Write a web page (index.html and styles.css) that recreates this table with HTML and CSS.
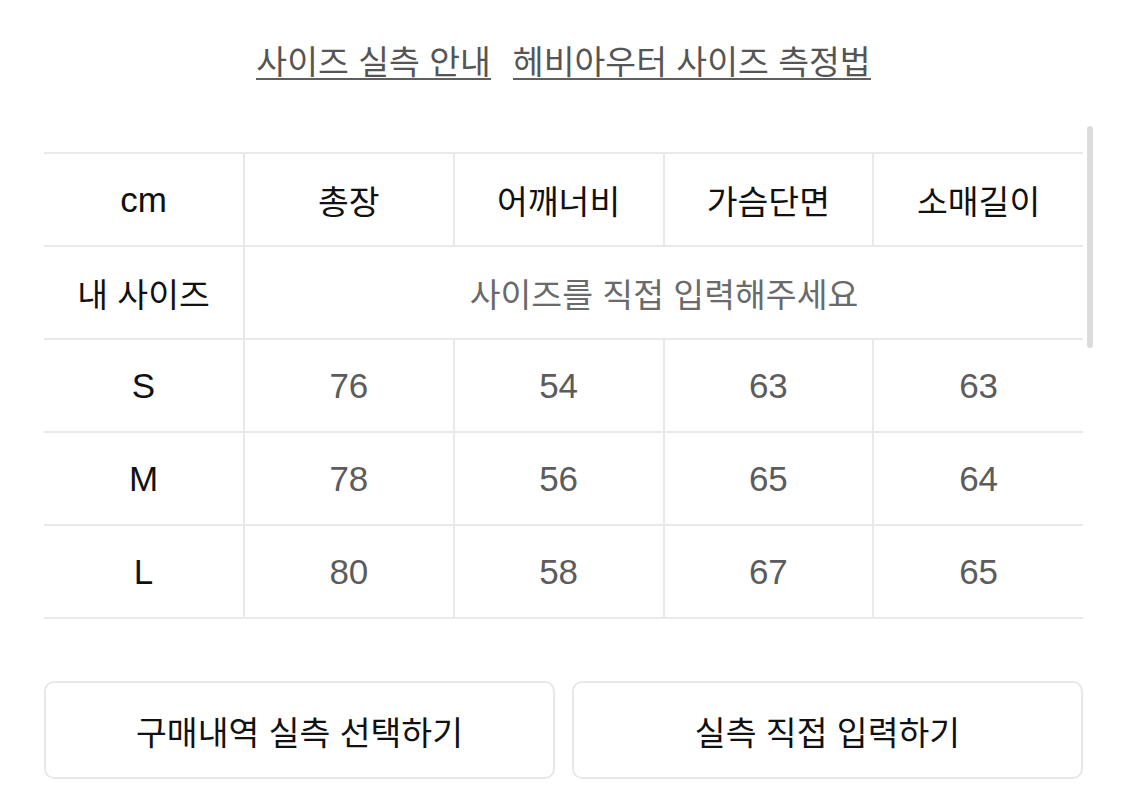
FILE: index.html
```html
<!DOCTYPE html>
<html lang="ko">
<head>
<meta charset="utf-8">
<title>사이즈</title>
<link rel="stylesheet" href="styles.css">
</head>
<body>
<div class="page">
  <nav class="links">
    <a class="link" href="#">사이즈 실측 안내</a>
    <a class="link" href="#">헤비아우터 사이즈 측정법</a>
  </nav>
  <div class="table-wrap">
    <table class="size-table">
      <tr>
        <th class="lat">cm</th>
        <th>총장</th>
        <th>어깨너비</th>
        <th>가슴단면</th>
        <th>소매길이</th>
      </tr>
      <tr>
        <th>내 사이즈</th>
        <td colspan="4" class="hint">사이즈를 직접 입력해주세요</td>
      </tr>
      <tr>
        <th class="lat">S</th>
        <td class="num">76</td><td class="num">54</td><td class="num">63</td><td class="num">63</td>
      </tr>
      <tr>
        <th class="lat">M</th>
        <td class="num">78</td><td class="num">56</td><td class="num">65</td><td class="num">64</td>
      </tr>
      <tr>
        <th class="lat">L</th>
        <td class="num">80</td><td class="num">58</td><td class="num">67</td><td class="num">65</td>
      </tr>
    </table>
    <div class="scrollbar"></div>
  </div>
  <div class="actions">
    <button class="btn" type="button">구매내역 실측 선택하기</button>
    <button class="btn" type="button">실측 직접 입력하기</button>
  </div>
</div>
</body>
</html>
```

FILE: styles.css
```css
html, body {
  margin: 0;
  padding: 0;
  background: #ffffff;
}

body {
  font-family: "Liberation Sans", "Noto Sans CJK KR", sans-serif;
  color: #111111;
}

.page {
  width: 1039px;
  padding: 0 42px 0 44px;
}

.links {
  display: flex;
  justify-content: center;
  align-items: flex-start;
  gap: 22px;
  padding-top: 41px;
  height: 152px;
  box-sizing: border-box;
}

.link {
  display: block;
  font-family: "Noto Sans CJK KR", sans-serif;
  font-size: 33.5px;
  line-height: 37px;
  color: #555555;
  text-decoration: none;
  border-bottom: 2.5px solid #5f5f5f;
}

.table-wrap {
  position: relative;
}

.size-table {
  width: 1039px;
  border-collapse: collapse;
  table-layout: fixed;
}

.size-table tr {
  height: 93px;
}

.size-table th,
.size-table td {
  border-top: 2px solid #e9e9e9;
  border-bottom: 2px solid #e9e9e9;
  border-left: 2px solid #e9e9e9;
  text-align: center;
  vertical-align: middle;
  padding: 0;
  font-family: "Noto Sans CJK KR", sans-serif;
  font-size: 33.5px;
  font-weight: 400;
  color: #111111;
}

.size-table th:first-child {
  border-left: none;
  width: 199px;
}

.size-table .lat {
  font-family: "Liberation Sans", sans-serif;
  font-size: 35px;
}

.size-table .num {
  font-family: "Liberation Sans", sans-serif;
  font-size: 35px;
  color: #5c5c5c;
}

.size-table .hint {
  color: #6a6a6a;
}

.scrollbar {
  position: absolute;
  right: -10px;
  top: -26px;
  width: 6px;
  height: 222px;
  border-radius: 3px;
  background: #dcdcdc;
}

.actions {
  display: flex;
  gap: 17px;
  margin-top: 62px;
}

.btn {
  flex: 1;
  height: 98px;
  background: #ffffff;
  border: 2px solid #e8e8e8;
  border-radius: 10px;
  font-family: "Noto Sans CJK KR", sans-serif;
  font-size: 33.5px;
  color: #111111;
  padding: 0;
}
```
